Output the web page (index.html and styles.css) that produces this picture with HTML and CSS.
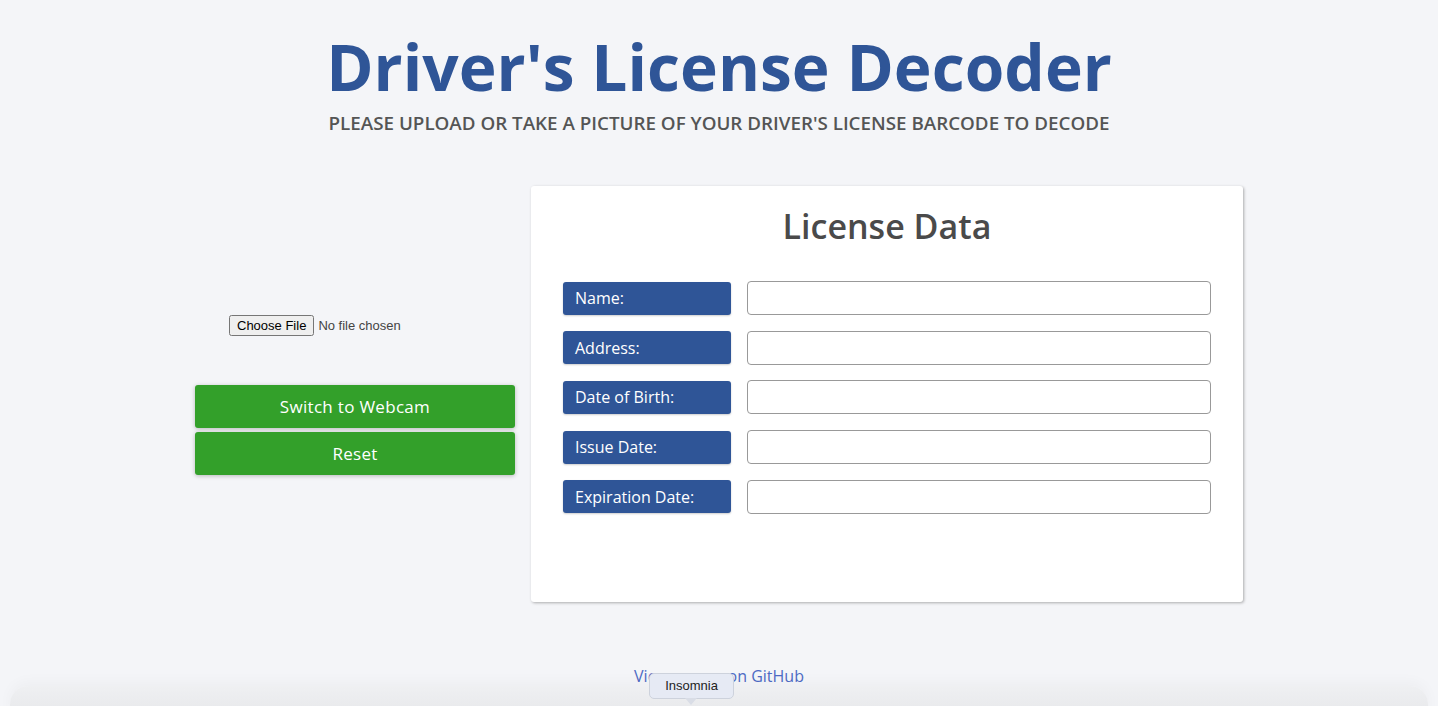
FILE: index.html
```html
<!DOCTYPE html>
<html lang="en">
<head>
<meta charset="utf-8">
<title>Driver's License Decoder</title>
<link rel="stylesheet" href="styles.css">
</head>
<body>
<header class="header">
  <h1 class="title">Driver's License Decoder</h1>
  <p class="subtitle">Please upload or take a picture of your driver's license barcode to decode</p>
</header>
<main class="main">
  <section class="capture">
    <div class="file-wrap"><input type="file" class="file-input"></div>
    <div class="actions">
      <button class="btn" type="button">Switch to Webcam</button>
      <button class="btn" type="button">Reset</button>
    </div>
  </section>
  <section class="card">
    <h2 class="card-title">License Data</h2>
    <div class="fields">
      <div class="row"><label class="label">Name:</label><input class="field" type="text"></div>
      <div class="row"><label class="label">Address:</label><input class="field" type="text"></div>
      <div class="row"><label class="label">Date of Birth:</label><input class="field" type="text"></div>
      <div class="row"><label class="label">Issue Date:</label><input class="field" type="text"></div>
      <div class="row"><label class="label">Expiration Date:</label><input class="field" type="text"></div>
    </div>
  </section>
</main>
<footer class="footer">
  <a class="gh-link" href="#">View source on GitHub</a>
</footer>
<div class="dock"></div>
<div class="tooltip">Insomnia</div>
</body>
</html>
```
FILE: styles.css
```css
* { box-sizing: border-box; }
html, body { height: 100%; }
body {
  margin: 0;
  background: #f4f5f8;
  font-family: "Open Sans", "Noto Sans", sans-serif;
  color: #444;
  overflow: hidden;
}
.header {
  text-align: center;
  padding-top: 23px;
}
.title {
  margin: 0;
  font-size: 64px;
  line-height: 88px;
  font-weight: 700;
  color: #2f5597;
  letter-spacing: 0.05px;
}
.subtitle {
  margin: 0;
  font-size: 18.8px;
  line-height: 24px;
  font-weight: 600;
  text-transform: uppercase;
  color: #555;
}
.main {
  display: flex;
  justify-content: center;
  align-items: center;
  gap: 16px;
  margin-top: 51px;
}
.capture {
  width: 320px;
  display: flex;
  flex-direction: column;
  align-items: center;
}
.file-wrap { width: 100%; text-align: center; margin-bottom: 49px; padding-right: 6px; }
.file-input { font-family: "Liberation Sans", Arial, sans-serif; font-size: 13px; }
.actions { width: 100%; display: flex; flex-direction: column; gap: 4px; }
.btn {
  width: 100%;
  height: 43px;
  border: none;
  border-radius: 3px;
  background: #33a02a;
  color: #fff;
  font-family: inherit;
  font-size: 17px;
  font-weight: 500;
  letter-spacing: 0.3px;
  box-shadow: 0 1px 4px rgba(0,0,0,0.25);
}
.card {
  width: 712px;
  height: 416px;
  background: #fff;
  border-radius: 3px;
  box-shadow: 1px 1px 3px rgba(0,0,0,0.3);
  padding: 18px 32px 0 32px;
}
.card-title {
  margin: 0;
  text-align: center;
  font-size: 34px;
  line-height: 44px;
  font-weight: 600;
  color: #4a4a4a;
}
.fields {
  margin-top: 33px;
  display: flex;
  flex-direction: column;
  gap: 15.7px;
}
.row { display: flex; align-items: center; gap: 16px; }
.label {
  width: 168px;
  height: 33px;
  background: #2f5597;
  border-radius: 3px;
  color: #fff;
  font-size: 16px;
  display: flex;
  align-items: center;
  padding-left: 12px;
  box-shadow: 0 1px 2px rgba(0,0,0,0.2);
}
.field {
  width: 464px;
  height: 34px;
  border: 1px solid #999;
  border-radius: 4px;
  background: #fff;
}
.footer {
  position: absolute;
  left: 0; right: 0;
  top: 665px;
  text-align: center;
}
.gh-link {
  color: #4e6bc4;
  text-decoration: none;
  font-size: 16px;
}
.dock {
  position: fixed;
  left: 10px; right: 10px; bottom: -20px;
  height: 40px;
  border-radius: 18px;
  background: linear-gradient(#eff0f2, #e4e5e8);
  box-shadow: 0 -4px 14px rgba(0,0,0,0.03);
  pointer-events: none;
}
.tooltip {
  position: fixed;
  left: 649px;
  top: 673px;
  width: 85px;
  height: 26px;
  background: #e6eaf4;
  border: 1px solid #cdd2dc;
  border-radius: 5px;
  font-family: "Liberation Sans", Arial, sans-serif;
  font-size: 13px;
  line-height: 24px;
  text-align: center;
  color: #222;
}
.tooltip::after {
  content: "";
  position: absolute;
  left: 35px;
  bottom: -7px;
  width: 0; height: 0;
  border-left: 6px solid transparent;
  border-right: 6px solid transparent;
  border-top: 7px solid #d9dde6;
}
```
